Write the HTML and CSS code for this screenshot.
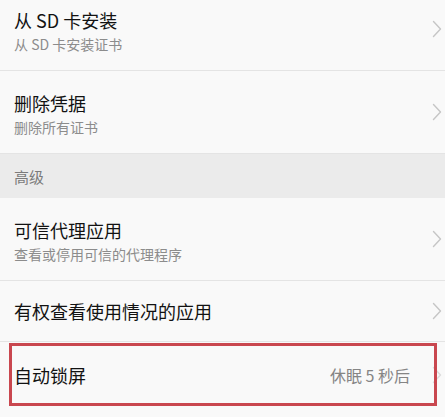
FILE: index.html
```html
<!DOCTYPE html>
<html lang="zh-CN">
<head>
<meta charset="utf-8">
<title>设置</title>
<link rel="stylesheet" href="styles.css">
</head>
<body>
<div class="list">
  <div class="row two-line">
    <div class="text">
      <div class="title">从 SD 卡安装</div>
      <div class="sub">从 SD 卡安装证书</div>
    </div>
    <svg class="chev" viewBox="0 0 10 18" width="10" height="18"><path d="M1.5 1.5 L8.5 9 L1.5 16.5"/></svg>
  </div>
  <div class="row two-line">
    <div class="text">
      <div class="title">删除凭据</div>
      <div class="sub">删除所有证书</div>
    </div>
    <svg class="chev" viewBox="0 0 10 18" width="10" height="18"><path d="M1.5 1.5 L8.5 9 L1.5 16.5"/></svg>
  </div>
  <div class="section">高级</div>
  <div class="row two-line">
    <div class="text">
      <div class="title">可信代理应用</div>
      <div class="sub">查看或停用可信的代理程序</div>
    </div>
    <svg class="chev" viewBox="0 0 10 18" width="10" height="18"><path d="M1.5 1.5 L8.5 9 L1.5 16.5"/></svg>
  </div>
  <div class="row one-line">
    <div class="text">
      <div class="title">有权查看使用情况的应用</div>
    </div>
    <svg class="chev" viewBox="0 0 10 18" width="10" height="18"><path d="M1.5 1.5 L8.5 9 L1.5 16.5"/></svg>
  </div>
  <div class="row one-line highlighted">
    <div class="text">
      <div class="title">自动锁屏</div>
    </div>
    <div class="value">休眠 5 秒后</div>
    <svg class="chev faint" viewBox="0 0 10 18" width="10" height="18"><path d="M1.5 1.5 L8.5 9 L1.5 16.5"/></svg>
    <div class="mark"></div>
  </div>
</div>
</body>
</html>
```
FILE: styles.css
```css
html, body {
  margin: 0;
  padding: 0;
  background: #f9f9f9;
  font-family: "Noto Sans CJK SC", "Noto Sans", sans-serif;
  overflow: hidden;
}

.list {
  margin-top: -12px;
}

.row {
  position: relative;
  display: flex;
  align-items: center;
  padding: 0 3px 0 14px;
  background: #f9f9f9;
  border-bottom: 1px solid #e4e4e4;
  box-sizing: border-box;
}

.two-line {
  height: 83px;
  padding-top: 4px;
}

.one-line {
  height: 61px;
}

.highlighted {
  height: 66px;
  border-bottom: none;
}

.text {
  flex: 1;
  min-width: 0;
}

.title {
  font-size: 18px;
  line-height: 24px;
  color: #121212;
}

.sub {
  margin-top: 2px;
  font-size: 14px;
  line-height: 20px;
  color: #8c8c8c;
}

.value {
  font-size: 16px;
  line-height: 22px;
  color: #858585;
  margin-right: 22px;
}

.chev {
  flex: none;
  margin-top: -4px;
}

.one-line .chev {
  margin-top: 0;
}

.chev path {
  fill: none;
  stroke: #c6c6c6;
  stroke-width: 1.4;
  stroke-linecap: round;
  stroke-linejoin: round;
}

.chev.faint path {
  stroke: #dcdcdc;
}

.section {
  height: 44px;
  display: flex;
  align-items: center;
  padding-left: 14px;
  background: #ebebeb;
  font-size: 15px;
  color: #7b7b7b;
}

.mark {
  position: absolute;
  left: 9px;
  right: 8px;
  top: 1px;
  height: 63px;
  box-sizing: border-box;
  border: 3px solid #c9474f;
  pointer-events: none;
}
```
